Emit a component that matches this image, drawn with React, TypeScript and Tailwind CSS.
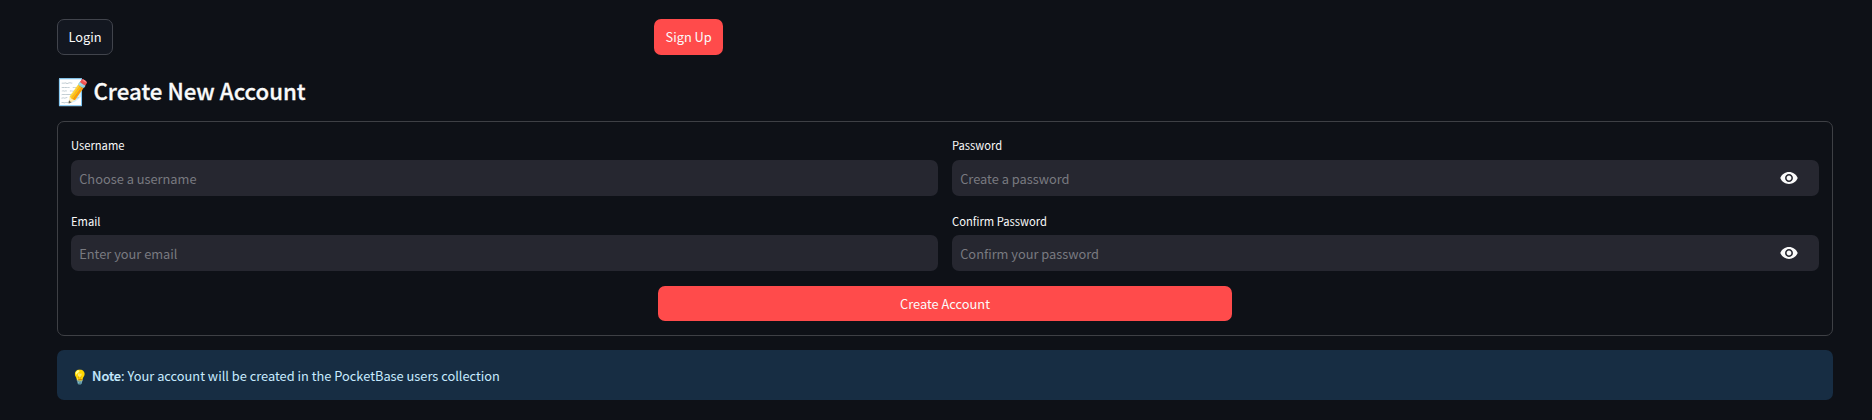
import React from "react";

type FieldProps = {
  label: string;
  placeholder: string;
  type?: "text" | "password";
};

function EyeIcon() {
  return (
    <svg viewBox="-0.63 -0.63 25.26 25.26" className="size-5 fill-[#fafafa]" aria-hidden="true">
      <path d="M12 4.5C7 4.5 2.73 7.61 1 12c1.73 4.39 6 7.5 11 7.5s9.27-3.11 11-7.5c-1.73-4.39-6-7.5-11-7.5zM12 17c-2.76 0-5-2.24-5-5s2.24-5 5-5 5 2.24 5 5-2.24 5-5 5zm0-8c-1.66 0-3 1.34-3 3s1.34 3 3 3 3-1.34 3-3-1.34-3-3-3z" />
    </svg>
  );
}

function Field({ label, placeholder, type = "text" }: FieldProps) {
  return (
    <label className="flex flex-col">
      <span className="flex h-[24.8px] items-start text-[11.2px] leading-[21px]">{label}</span>
      <span className="flex h-9 items-center rounded-[7px] bg-[#262730]">
        <input
          type={type}
          placeholder={placeholder}
          className="h-9 min-w-0 flex-1 bg-transparent px-[8.2px] text-[12.82px] outline-none placeholder:text-[#797a80]"
        />
        {type === "password" && (
          <button type="button" className="mr-5 flex">
            <EyeIcon />
          </button>
        )}
      </span>
    </label>
  );
}

export default function App() {
  return (
    <main className="flex min-h-[420px] flex-col bg-[#0e1117] pt-[19px] pr-[39px] pl-[57px] font-['Noto_Sans_CJK_SC','Noto_Color_Emoji',sans-serif] text-[12.82px] text-[#fafafa]">
      <nav className="grid h-9 grid-cols-3 gap-[14px] leading-[22px]">
        <div className="flex">
          <button className="w-14 rounded-[7px] border border-[#41444c] bg-[#131720]">Login</button>
        </div>
        <div className="flex">
          <button className="w-[69px] rounded-[7px] bg-[#ff4b4b] pl-px">Sign Up</button>
        </div>
      </nav>

      <h3 className="mt-5 flex h-[30px] items-center text-[22.25px] leading-[30px] font-medium">
        <span className="mr-1 w-[32.5px] pb-px text-[25.5px]">📝</span>
        <span className="[-webkit-text-stroke:0.3px_#fafafa]">Create New Account</span>
      </h3>

      <form className="mt-4 flex h-[215px] flex-col rounded-[7px] border border-[#3e4045] px-[13px] pt-[13.3px]">
        <div className="grid grid-cols-2 gap-x-[14px] gap-y-[14.5px]">
          <Field label="Username" placeholder="Choose a username" />
          <Field label="Password" placeholder="Create a password" type="password" />
          <Field label="Email" placeholder="Enter your email" />
          <Field label="Confirm Password" placeholder="Confirm your password" type="password" />
        </div>
        <button type="button" className="mt-[14.6px] h-[35px] w-[574px] self-center rounded-[7px] bg-[#ff4b4b] pt-px">
          Create Account
        </button>
      </form>

      <section className="mt-[14px] flex h-[50px] items-center rounded-[7px] bg-[#172d43] px-[14px] pt-0.5 leading-[22px] text-[#c7ebff]">
        <p className="flex items-center whitespace-pre">
          <span className="mr-[3px] w-[18px] text-[14px]">💡</span>
          <strong className="font-medium [-webkit-text-stroke:0.2px_#c7ebff]">Note</strong>: Your account will be created in the PocketBase users collection
        </p>
      </section>
    </main>
  );
}
